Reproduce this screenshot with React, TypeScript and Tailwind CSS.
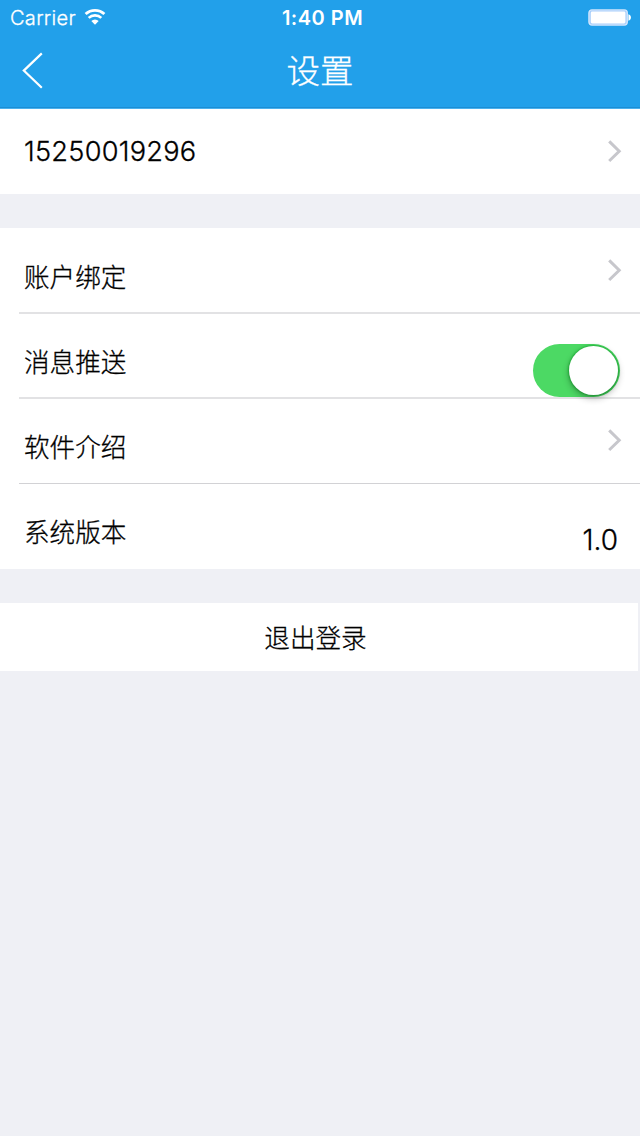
import React from "react";

interface SettingsRowProps {
  label: string;
  divider?: string;
  children?: React.ReactNode;
}

const BackIcon: React.FC = () => (
  <svg width="24" height="38" viewBox="0 0 24 38" fill="none">
    <path d="M22.8 1.4 4.8 18.6 22.8 35.8" stroke="#fff" strokeWidth="2.2" />
  </svg>
);

const ChevronIcon: React.FC = () => (
  <svg width="16" height="24" viewBox="0 0 16 24" fill="none">
    <path d="M2.2 2.4 12.2 12.2 2.2 22" stroke="#c7c7cc" strokeWidth="3" />
  </svg>
);

const WifiIcon: React.FC = () => (
  <svg width="22" height="18" viewBox="0 0 22 18" fill="none">
    <path d="M1.6 6.1a13.6 13.6 0 0 1 18.8 0" stroke="#fff" strokeWidth="2.8" />
    <path d="M4.7 9.9a9 9 0 0 1 12.6 0" stroke="#fff" strokeWidth="2.6" />
    <path d="M7.3 12.9a5.3 5.3 0 0 1 7.4 0L11 16.8z" fill="#fff" />
  </svg>
);

const BatteryIcon: React.FC = () => (
  <svg width="44" height="17" viewBox="0 0 44 17" fill="none">
    <rect x="0.9" y="0.9" width="38.4" height="15.2" rx="3" fill="#a9cffa" stroke="#d3e6fd" strokeWidth="1.3" />
    <rect x="2.8" y="2.5" width="34.6" height="12" rx="1.4" fill="#fff" />
    <path d="M40.4 5.3c3.4 0.6 3.4 5.8 0 6.4z" fill="#fff" />
  </svg>
);

const SettingsRow: React.FC<SettingsRowProps> = ({
  label,
  divider = "",
  children,
}) => {
  return (
    <div className="h-[85px] flex flex-col">
      <div className="flex-1 flex justify-between pl-6">
        <span className="mt-[31px] text-[25.6px] leading-[38px] font-light [-webkit-text-stroke:0.3px]">
          {label}
        </span>
        {children}
      </div>
      <div className={`ml-[19px] shrink-0 ${divider}`} />
    </div>
  );
};

const App: React.FC = () => {
  return (
    <div className="w-[640px] h-[1136px] overflow-hidden bg-[#eff0f5] text-black font-['Inter','Noto_Sans_CJK_SC',sans-serif]">
      {/* status bar and title */}
      <header className="h-[109px] bg-[#22a0ea] text-white">
        <div className="h-[36px] grid grid-cols-3 pl-[10px] pr-[8px]">
          <div className="flex gap-[8px]">
            <span className="text-[20px] leading-[36px] tracking-[0.3px] font-light [-webkit-text-stroke:0.3px]">
              Carrier
            </span>
            <div className="mt-[8px]">
              <WifiIcon />
            </div>
          </div>
          <span className="pl-[3px] text-center text-[20px] leading-[36px] font-semibold tracking-[0.5px]">
            1:40 PM
          </span>
          <div className="flex justify-end mt-[9px]">
            <BatteryIcon />
          </div>
        </div>
        <div className="h-[71px] grid grid-cols-3 pl-[19px] pr-[19px]">
          <button className="w-[24px] h-[38px] mt-[16px]">
            <BackIcon />
          </button>
          <h1 className="text-center text-[33.5px] leading-[50px] mt-[10px] font-light [-webkit-text-stroke:0.3px]">
            设置
          </h1>
        </div>
        <div className="h-px bg-[#1c8ed4]" />
        <div className="h-px bg-[#4bb1ee]" />
      </header>

      <section className="h-[85px] bg-white flex items-center justify-between pl-6 pr-[17px]">
        <span className="text-[27.2px] leading-[38px] font-light tracking-[0.25px] [-webkit-text-stroke:0.3px]">
          15250019296
        </span>
        <div className="mb-[2px]">
          <ChevronIcon />
        </div>
      </section>

      <section className="h-[341px] mt-[34px] bg-white">
        <SettingsRow label="账户绑定" divider="h-[2px] -mb-px bg-[#e2e2e4]">
          <div className="mt-[30px] pr-[17px]">
            <ChevronIcon />
          </div>
        </SettingsRow>
        <SettingsRow label="消息推送" divider="h-[2px] -mb-px bg-[#e2e2e4]">
          <button className="w-[87px] h-[53px] mt-[31px] mr-[20px] p-[2px] flex justify-end relative rounded-full bg-[#4cd964]">
            <span className="size-[49px] rounded-full bg-white shadow-[0_3px_7px_rgba(0,0,0,0.3),0_0_2px_1px_rgba(0,160,30,0.5)]" />
          </button>
        </SettingsRow>
        <SettingsRow label="软件介绍" divider="h-px -mb-px bg-[#d2d2d5]">
          <div className="mt-[30px] pr-[17px]">
            <ChevronIcon />
          </div>
        </SettingsRow>
        <SettingsRow label="系统版本">
          <span className="mt-[38px] mr-[22px] text-[28px] leading-[38px] font-light [-webkit-text-stroke:0.3px]">
            1.0
          </span>
        </SettingsRow>
      </section>

      <button className="block w-[638px] h-[68px] mt-[34px] bg-white pr-[7px] text-center text-[25.6px] leading-[71px] font-light [-webkit-text-stroke:0.3px]">
        退出登录
      </button>
    </div>
  );
};

export default App;
